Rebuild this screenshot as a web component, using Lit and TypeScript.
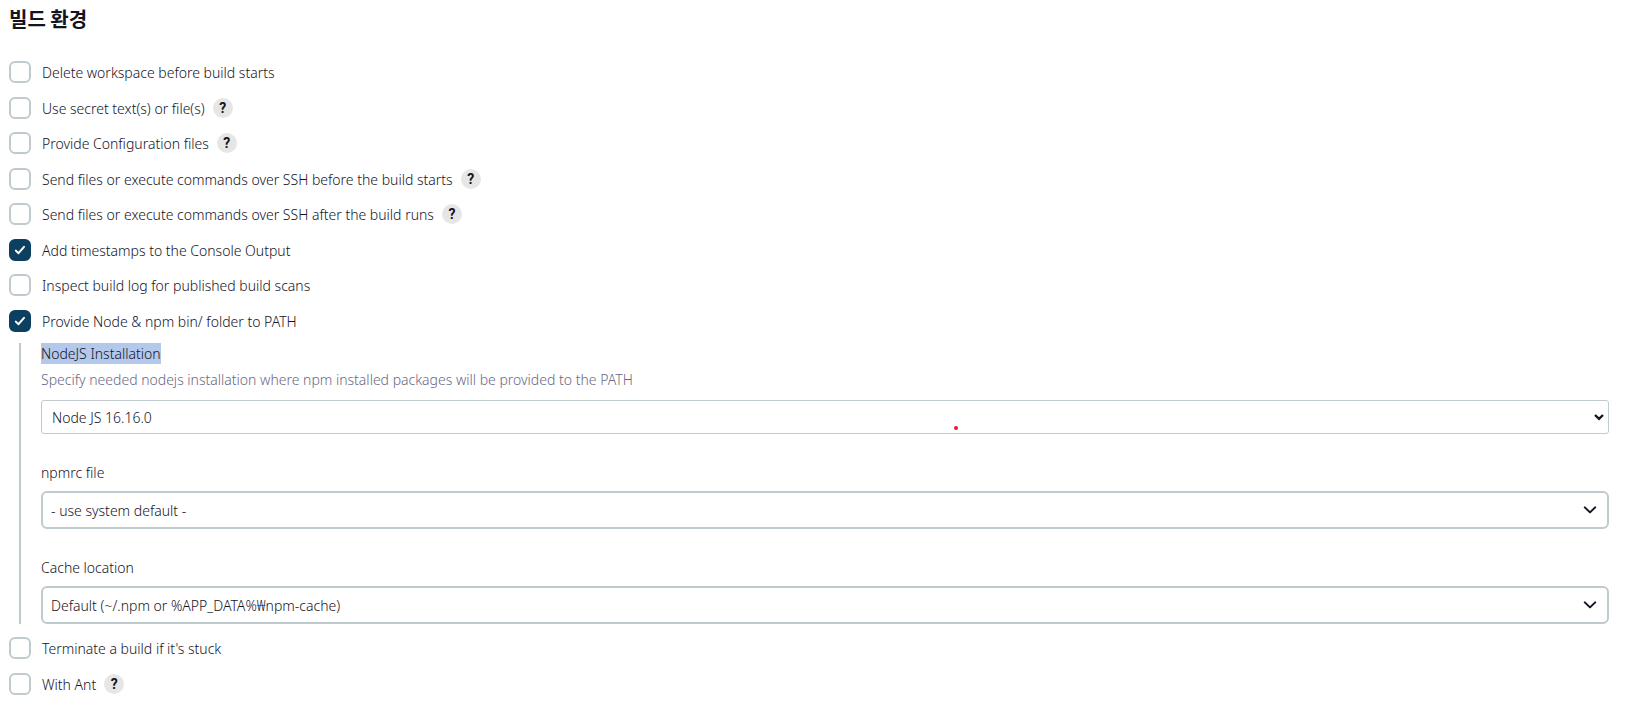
import { LitElement, html, css, nothing } from "lit";
import { customElement, property } from "lit/decorators.js";

interface Option {
  id: string;
  label: string;
  help?: boolean;
  checked?: boolean;
}

const BEFORE: Option[] = [
  { id: "clean", label: "Delete workspace before build starts" },
  { id: "secret", label: "Use secret text(s) or file(s)", help: true },
  { id: "config", label: "Provide Configuration files", help: true },
  { id: "ssh-before", label: "Send files or execute commands over SSH before the build starts", help: true },
  { id: "ssh-after", label: "Send files or execute commands over SSH after the build runs", help: true },
  { id: "timestamps", label: "Add timestamps to the Console Output", checked: true },
  { id: "scans", label: "Inspect build log for published build scans" },
  { id: "node", label: "Provide Node & npm bin/ folder to PATH", checked: true },
];

const AFTER: Option[] = [
  { id: "stuck", label: "Terminate a build if it's stuck" },
  { id: "ant", label: "With Ant", help: true },
];

@customElement("build-option")
class BuildOption extends LitElement {
  @property({ attribute: false }) option!: Option;

  static styles = css`
    :host {
      display: flex;
      align-items: center;
      height: 22px;
    }
    .box {
      appearance: none;
      box-sizing: border-box;
      flex: none;
      width: 22px;
      height: 22px;
      margin: 0;
      border: 2px solid #bfcbcf;
      border-radius: 6px;
      background: #fff;
    }
    .control {
      display: grid;
      flex: none;
    }
    .box,
    .tick {
      grid-area: 1 / 1;
    }
    .box:checked {
      border-color: #0b4060;
      background: #0b4060;
    }
    .tick {
      width: 22px;
      height: 22px;
      pointer-events: none;
      visibility: hidden;
    }
    .box:checked + .tick {
      visibility: visible;
    }
    .label {
      padding: 1px 0 0 11px;
      line-height: 22px;
    }
    .help {
      width: 20px;
      height: 20px;
      margin: 0 0 0 8px;
      padding: 0;
      border: 0;
      border-radius: 50%;
      background: #e6e6e6;
      color: #14141f;
      font: 700 14px/20px Roboto, sans-serif;
      text-align: center;
    }
  `;

  render() {
    const o = this.option;
    return html`
      <span class="control">
        <input class="box" type="checkbox" id=${o.id} .checked=${!!o.checked} />
        <svg class="tick" viewBox="0 0 22 22" aria-hidden="true">
          <path d="M6.8 11.6 9.5 14.2 15 7.8" fill="none" stroke="#fff" stroke-width="2" stroke-linecap="round" stroke-linejoin="round" />
        </svg>
      </span>
      <label class="label" for=${o.id}>${o.label}</label>
      ${o.help ? html`<button class="help" type="button" title=${`Help for ${o.label}`}>?</button>` : nothing}
    `;
  }
}

@customElement("app-root")
class AppRoot extends LitElement {
  static styles = css`
    :host {
      display: block;
      padding: 7px 20px 9px 9px;
      background: #fff;
      color: #14141f;
      font: 300 14px/21px "Noto Sans", "Noto Sans CJK KR", sans-serif;
    }
    .title {
      margin: 0 0 30px;
      font: 700 20px/24px "Noto Sans CJK KR", sans-serif;
    }
    .row {
      margin-bottom: 13px;
    }
    .row:nth-child(odd) {
      margin-bottom: 14px;
    }
    .row:last-child {
      margin-bottom: 0;
    }
    .nested {
      margin: 11px 0 13px 10px;
      padding-left: 20px;
      border-left: 2px solid #bfcbcf;
    }
    .field + .field {
      margin-top: 28px;
    }
    .name {
      display: block;
      width: fit-content;
      margin-bottom: 8px;
    }
    .selected {
      margin-bottom: 5px;
      background: #b3c8ea;
    }
    .hint {
      margin: 0 0 10px;
      color: #6a6785;
    }
    .picker {
      display: grid;
      align-items: center;
    }
    .select {
      grid-area: 1 / 1;
      appearance: none;
      box-sizing: border-box;
      width: 100%;
      height: 38px;
      margin: 0;
      padding: 0 40px 0 8px;
      border: 2px solid #bfcbcf;
      border-radius: 6px;
      background: #fff;
      color: inherit;
      font: inherit;
    }
    .select.plain {
      height: 34px;
      padding-left: 10px;
      border-width: 1px;
      border-radius: 3px;
    }
    .arrow {
      grid-area: 1 / 1;
      justify-self: end;
      width: 14px;
      height: 8px;
      margin-right: 12px;
      pointer-events: none;
    }
    .arrow.small {
      width: 10px;
      height: 8px;
      margin-right: 5px;
    }
    .canvas {
      position: relative;
    }
    .dot {
      position: absolute;
      right: 651px;
      bottom: 4px;
      width: 4px;
      height: 4px;
      border-radius: 50%;
      background: #ed1c24;
    }
  `;

  private rows(options: Option[]) {
    return options.map((o) => html`<build-option class="row" .option=${o}></build-option>`);
  }

  private arrow() {
    return html`<svg class="arrow" viewBox="0 0 14 8" aria-hidden="true">
      <path d="M1.8 1.4 7 6.4 12.2 1.4" fill="none" stroke="#14141f" stroke-width="2" stroke-linecap="round" stroke-linejoin="round" />
    </svg>`;
  }

  render() {
    return html`
      <h1 class="title">빌드 환경</h1>
      <div>${this.rows(BEFORE)}</div>
      <div class="nested">
        <div class="field">
          <label class="name selected" for="install">NodeJS Installation</label>
          <p class="hint">Specify needed nodejs installation where npm installed packages will be provided to the PATH</p>
          <div class="picker canvas">
            <select class="select plain" id="install">
              <option>Node JS 16.16.0</option>
            </select>
            <svg class="arrow small" viewBox="0 0 10 8" aria-hidden="true">
              <path d="M1 2 5 5.8 9 2" fill="none" stroke="#14141f" stroke-width="2.4" />
            </svg>
            <span class="dot"></span>
          </div>
        </div>
        <div class="field">
          <label class="name" for="npmrc">npmrc file</label>
          <div class="picker">
            <select class="select" id="npmrc">
              <option>- use system default -</option>
            </select>
            ${this.arrow()}
          </div>
        </div>
        <div class="field">
          <label class="name" for="cache">Cache location</label>
          <div class="picker">
            <select class="select" id="cache">
              <option>Default (~/.npm or %APP_DATA%₩npm-cache)</option>
            </select>
            ${this.arrow()}
          </div>
        </div>
      </div>
      <div>${this.rows(AFTER)}</div>
    `;
  }
}
